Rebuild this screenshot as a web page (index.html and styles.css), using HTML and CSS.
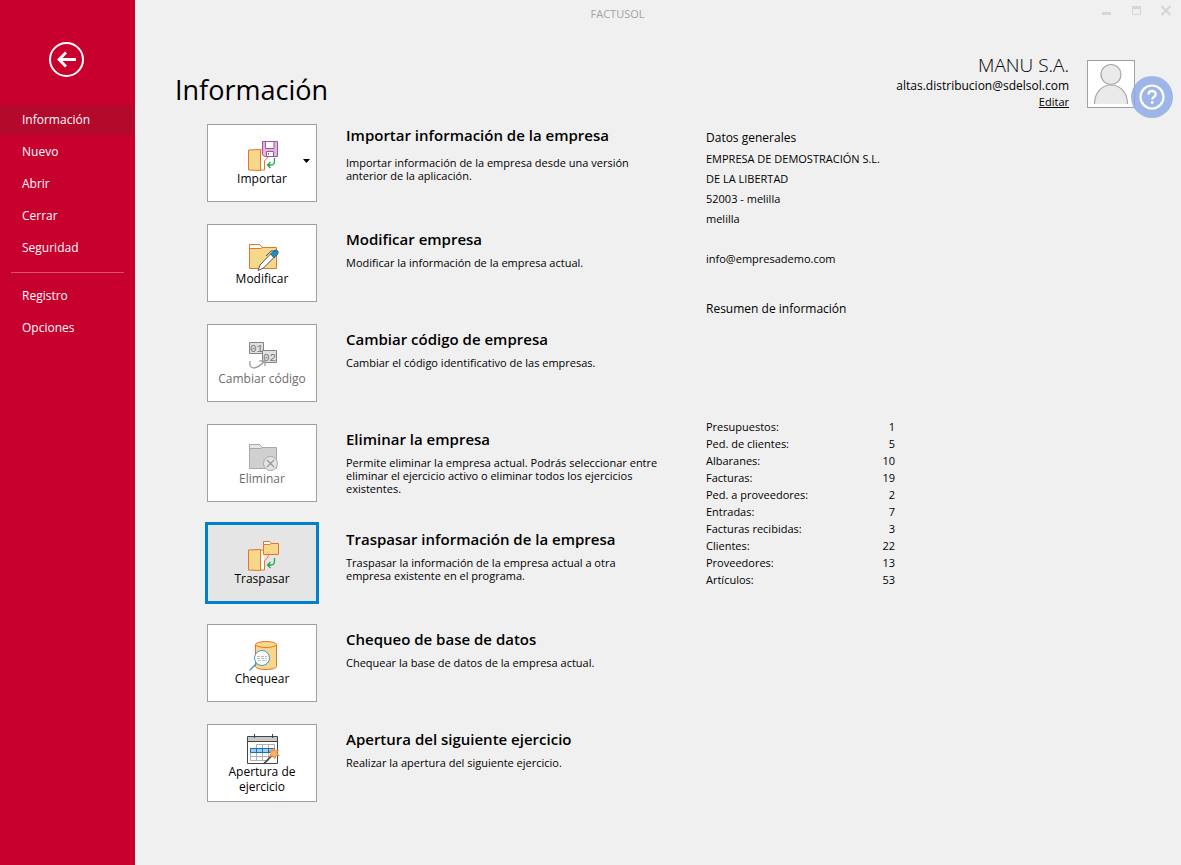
FILE: index.html
```html
<!DOCTYPE html>
<html lang="es">
<head>
<meta charset="utf-8">
<meta name="viewport" content="width=device-width, initial-scale=1">
<title>FACTUSOL</title>
<link rel="stylesheet" href="styles.css">
</head>
<body>
<div class="app">
  <aside class="sidebar">
    <button class="back" type="button" aria-label="Volver">
      <svg viewBox="0 0 36 36" width="36" height="36" fill="none" stroke="#fff"><circle cx="18.500" cy="18.500" r="16.500" stroke-width="2"/><path d="M28 18.500H11M18 11.500l-7 7 7 7" stroke-width="2.800"/></svg>
    </button>
    <nav class="menu">
      <a class="menu-item active" href="#">Información</a>
      <a class="menu-item" href="#">Nuevo</a>
      <a class="menu-item" href="#">Abrir</a>
      <a class="menu-item" href="#">Cerrar</a>
      <a class="menu-item" href="#">Seguridad</a>
      <hr class="menu-line">
      <a class="menu-item" href="#">Registro</a>
      <a class="menu-item" href="#">Opciones</a>
    </nav>
  </aside>

  <div class="page">
    <div class="titlebar">
      <span class="app-name">FACTUSOL</span>
      <div class="controls">
        <button type="button" aria-label="Minimizar"><svg viewBox="0 0 12 12" width="12" height="12"><path d="M2 7h9v3H2z" fill="#d6d6d6"/></svg></button>
        <button type="button" aria-label="Maximizar"><svg viewBox="0 0 12 12" width="12" height="12"><path d="M2.500 2.500h8v7h-8z" fill="none" stroke="#d6d6d6"/><path d="M2 1h9v3H2z" fill="#d6d6d6"/></svg></button>
        <button type="button" aria-label="Cerrar ventana"><svg viewBox="0 0 12 12" width="12" height="12"><path d="M1.500 1l9 9M10.500 1l-9 9" stroke="#d6d6d6" stroke-width="2.200"/></svg></button>
      </div>
    </div>

    <header class="header">
      <h1>Información</h1>
      <div class="account">
        <div class="account-text">
          <span class="account-name">MANU S.A.</span>
          <span class="account-mail">altas.distribucion@sdelsol.com</span>
          <a class="account-edit" href="#">Editar</a>
        </div>
        <div class="avatar">
          <svg viewBox="0 0 46 46" width="46" height="46" fill="#eaeaea" stroke="#a6a6a6" stroke-width="1.200"><path d="M6.500 43c0-11 7-19 16.500-19s16.500 8 16.500 19" /><circle cx="23" cy="13.500" r="10"/></svg>
          <button class="help" type="button" aria-label="Ayuda">
            <svg viewBox="0 0 42 42" width="42" height="42" fill="none" stroke="#fff"><circle cx="21" cy="21" r="11.500" stroke-width="2.200"/><path d="M17.500 18.500c0-4.600 7.200-4.600 7.200-.3 0 2.800-3.500 2.500-3.500 5.300" stroke-width="2.300"/><circle cx="21.200" cy="26.500" r="1.400" fill="#fff" stroke="none"/></svg>
          </button>
        </div>
      </div>
    </header>

    <div class="content">
      <main class="actions">
        <section class="action">
          <button class="tile" type="button">
            <svg class="icon" viewBox="0 0 32 31"><path d="M14.500 10h4v-1M14.500 30h4v-9l3.500-4" fill="#fff" stroke="#e8742a"/><path d="M15 11h3v18h-3z" fill="#fff"/><path d="M2.500 10l12-.5v21l-12-.5z" fill="#f6d88c" stroke="#e8742a"/><path d="M16.500 1.500h15v15h-13l-2-2z" fill="#dcb9dc" stroke="#a353a3"/><path d="M19.500 1.500h8.500v7h-8.500zM20.500 16.500v-5h7v5z" fill="#fff" stroke="#a353a3"/><path d="M22.500 13v2" stroke="#777"/><path d="M28.500 18v3q0 4-3.500 4h-3M24.500 22l-3 3 3 3" fill="none" stroke="#21a651" stroke-width="1.300"/></svg>
            <span>Importar</span>
            <svg class="caret" viewBox="0 0 7 4"><path d="M0 0h7L3.500 4z"/></svg>
          </button>
          <div class="action-text first">
            <h2>Importar información de la empresa</h2>
            <p>Importar información de la empresa desde una versión anterior de la aplicación.</p>
          </div>
        </section>
        <section class="action">
          <button class="tile" type="button">
            <svg class="icon" viewBox="0 0 32 31"><path d="M3.500 28.500v-24h10l3 3h14v21z" fill="#f6d88c" stroke="#e8742a"/><path d="M3.500 8.500v-4h10l3 3-2 1z" fill="#fff" stroke="#e8742a"/><path d="M12 30.500l2-5.500L25 13.500l3.500 3.500-11 11z" fill="#fff" stroke="#555"/><path d="M24.500 14l3-3q2.500-2 4.500 0 1 2-1 4l-3 3z" fill="#1590d0" stroke="#28475a" stroke-width=".6"/><path d="M20 16l5-5h5" fill="none" stroke="#555"/></svg>
            <span>Modificar</span>
          </button>
          <div class="action-text">
            <h2>Modificar empresa</h2>
            <p>Modificar la información de la empresa actual.</p>
          </div>
        </section>
        <section class="action">
          <button class="tile" type="button" disabled>
            <svg class="icon" viewBox="0 0 32 31"><path d="M3.500 2.500h14v11h-14z" fill="#e0e0e0" stroke="#858585"/><path d="M16.500 10.500h14v12h-14z" fill="#e0e0e0" stroke="#858585"/><text class="digits" x="4" y="12">01</text><text class="digits" x="17" y="21">02</text><path d="M4 21q-1 7 4 7 5-.5 11-7.500M13.500 21h5.500v5" fill="none" stroke="#a0a0a0" stroke-width="1.400"/></svg>
            <span>Cambiar código</span>
          </button>
          <div class="action-text">
            <h2>Cambiar código de empresa</h2>
            <p>Cambiar el código identificativo de las empresas.</p>
          </div>
        </section>
        <section class="action">
          <button class="tile" type="button" disabled>
            <svg class="icon" viewBox="0 0 32 31"><path d="M3.500 28.500v-24h10l3 3h14v21z" fill="#d0d0d0" stroke="#a9a9a9"/><path d="M3.500 8.500v-4h10l3 3-2 1z" fill="#e6e6e6" stroke="#a9a9a9"/><circle cx="24.500" cy="23.500" r="7" fill="#e4e4e4" stroke="#a9a9a9"/><path d="M21 20l7 7M28 20l-7 7" stroke="#999" stroke-width="1.300"/></svg>
            <span>Eliminar</span>
          </button>
          <div class="action-text">
            <h2>Eliminar la empresa</h2>
            <p>Permite eliminar la empresa actual. Podrás seleccionar entre eliminar el ejercicio activo o eliminar todos los ejercicios existentes.</p>
          </div>
        </section>
        <section class="action">
          <button class="tile selected" type="button">
            <svg class="icon" viewBox="0 0 32 31"><path d="M14.500 10h4v-1M14.500 30h4v-9l3.500-4v-3" fill="#fff" stroke="#e8742a"/><path d="M15 11h3v18h-3z" fill="#fff"/><path d="M2.500 10l12-.5v21l-12-.5z" fill="#f6d88c" stroke="#e8742a"/><path d="M17.500 14.500v-13h6l2 2h7v11z" fill="#f6d88c" stroke="#e8742a"/><path d="M17.500 4.500v-3h6l2 2-2 1z" fill="#fff" stroke="#e8742a"/><path d="M28.500 18v3q0 4-3.500 4h-3M24.500 22l-3 3 3 3" fill="none" stroke="#21a651" stroke-width="1.300"/></svg>
            <span>Traspasar</span>
          </button>
          <div class="action-text">
            <h2>Traspasar información de la empresa</h2>
            <p>Traspasar la información de la empresa actual a otra empresa existente en el programa.</p>
          </div>
        </section>
        <section class="action">
          <button class="tile" type="button">
            <svg class="icon" viewBox="0 0 32 31"><path d="M9.500 4.500v22c0 4 21 4 21 0v-22" fill="#f6d88c" stroke="#e8742a"/><ellipse cx="20" cy="4.500" rx="10.500" ry="3" fill="#f6d88c" stroke="#e8742a"/><path d="M10.500 23.500L3.500 30.500" stroke="#3d96cf" stroke-width="1.500"/><circle cx="16" cy="18" r="7.500" fill="#fff" stroke="#3d96cf"/><path d="M11 16.500h10M11 18.500h10M12 20.500h9" stroke="#aaa" stroke-width=".8" stroke-dasharray="3 1"/></svg>
            <span>Chequear</span>
          </button>
          <div class="action-text">
            <h2>Chequeo de base de datos</h2>
            <p>Chequear la base de datos de la empresa actual.</p>
          </div>
        </section>
        <section class="action">
          <button class="tile" type="button">
            <svg class="icon" viewBox="0 0 32 31"><path d="M1.500 3.500h30v27h-30z" fill="#fff" stroke="#444"/><path d="M2 4h29v4H2z" fill="#c8c8c8"/><path d="M1.500 8.500h30M8.500 1v4M26.500 1v4" stroke="#444"/><path d="M10.500 11.500h18v12h-6v4h-18v-12M4.500 23.500h18M10.500 11.500v16M16.500 11.500v16M22.500 11.500v12" fill="none" stroke="#b0b0b0"/><path d="M4.500 15.500h24v4h-24zM10.500 15.500v4M16.500 15.500v4M22.500 15.500v4" fill="#9ccdf0" stroke="#1671b8"/><path d="M17.500 31L26 22.500" stroke="#444" stroke-width="1.700"/><path d="M28 15l1.300 3 3-1-1.300 3 2 2.500-3.200.2-1 3-2-2.700-3.300.5 1.500-3-1.500-2.700 3.200.2z" fill="#f9b268" stroke="#e8742a" stroke-width=".8"/></svg>
            <span>Apertura de ejercicio</span>
          </button>
          <div class="action-text">
            <h2>Apertura del siguiente ejercicio</h2>
            <p>Realizar la apertura del siguiente ejercicio.</p>
          </div>
        </section>
      </main>

      <aside class="summary">
        <h3>Datos generales</h3>
        <address class="company">
          <span>EMPRESA DE DEMOSTRACIÓN S.L.</span>
          <span>DE LA LIBERTAD</span>
          <span>52003 - melilla</span>
          <span>melilla</span>
          <span class="mail">info@empresademo.com</span>
        </address>
        <h3>Resumen de información</h3>
        <table class="totals">
          <tbody>
            <tr><th scope="row">Presupuestos:</th><td>1</td></tr>
            <tr><th scope="row">Ped. de clientes:</th><td>5</td></tr>
            <tr><th scope="row">Albaranes:</th><td>10</td></tr>
            <tr><th scope="row">Facturas:</th><td>19</td></tr>
            <tr><th scope="row">Ped. a proveedores:</th><td>2</td></tr>
            <tr><th scope="row">Entradas:</th><td>7</td></tr>
            <tr><th scope="row">Facturas recibidas:</th><td>3</td></tr>
            <tr><th scope="row">Clientes:</th><td>22</td></tr>
            <tr><th scope="row">Proveedores:</th><td>13</td></tr>
            <tr><th scope="row">Artículos:</th><td>53</td></tr>
          </tbody>
        </table>
      </aside>
    </div>
  </div>
</div>
</body>
</html>
```

FILE: styles.css
```css
* { box-sizing: border-box; }

body {
  margin: 0;
  background: #f0f0f0;
  color: #000;
  font-family: "Open Sans", "Noto Sans", sans-serif;
  font-size: 11px;
}

h1, h2, h3, p { margin: 0; }

button {
  padding: 0;
  border: 0;
  background: none;
  font: inherit;
  color: inherit;
}

svg { display: block; }

.app { display: flex; min-height: 100vh; }

/* Sidebar */
.sidebar {
  flex: none;
  width: 135px;
  background: #c8002d;
}

.back { display: block; margin: 41px auto 28px 48px; }

.menu { display: flex; flex-direction: column; gap: 2px; }

.menu-item {
  padding: 0 22px;
  font-size: 12px;
  line-height: 30px;
  color: #fff;
  text-decoration: none;
}

.menu-item.active { background: #b4092b; }

.menu-line {
  width: 113px;
  margin: 7px 0 6px 11px;
  border: 0;
  border-top: 1px solid #d8506c;
}

/* Title bar and header */
.page { flex: 1; min-width: 0; }

.titlebar { display: flex; height: 28px; }

.app-name {
  flex: 1;
  text-align: center;
  font-size: 11px;
  line-height: 28px;
  color: #a3a3a3;
}

.controls {
  display: flex;
  align-items: flex-start;
  gap: 18px;
  width: 81px;
  padding-top: 5px;
}

.header {
  display: flex;
  justify-content: space-between;
  padding: 26px 46px 0 40px;
}

h1 {
  padding-top: 16px;
  font-size: 27px;
  font-weight: 400;
  line-height: 40px;
}

.account { display: flex; gap: 18px; }

.account-text {
  display: flex;
  flex-direction: column;
  align-items: flex-end;
}

.account-name { font-size: 19px; font-weight: 300; line-height: 23px; }
.account-mail { font-size: 12px; line-height: 17px; }
.account-edit { font-size: 11px; line-height: 16px; color: #000; }

.avatar {
  position: relative;
  width: 48px;
  height: 48px;
  margin-top: 6px;
  border: 1px solid #a0a0a0;
  background: #fff;
}

.help {
  position: absolute;
  top: 15px;
  left: 43px;
  border-radius: 50%;
  background: rgba(138, 166, 230, 0.8);
}

/* Actions */
.content {
  display: flex;
  gap: 46px;
  padding: 14px 40px 40px 72px;
}

.actions {
  display: flex;
  flex-direction: column;
  gap: 22px;
  width: 453px;
}

.action { display: flex; gap: 29px; }

.tile {
  position: relative;
  display: flex;
  flex: none;
  flex-direction: column;
  align-items: center;
  justify-content: center;
  width: 110px;
  height: 78px;
  padding: 0 12px;
  border: 1px solid #a0a0a0;
  background: #fff;
  font-size: 12px;
  line-height: 15px;
}

.tile:disabled { padding: 0; color: #6d6d6d; }

.tile.selected {
  background: #e5e5e5;
  outline: 3px solid #0080cc;
  outline-offset: -1px;
}

.icon { width: 32px; height: 31px; overflow: visible; }

.digits {
  font-family: "Liberation Mono", monospace;
  font-size: 11px;
  fill: #777;
}

.caret {
  position: absolute;
  top: 34px;
  right: 6px;
  width: 7px;
  height: 4px;
}

.action-text { padding-top: 5px; }

h2 {
  margin-bottom: 7px;
  font-size: 15px;
  font-weight: 600;
  line-height: 20px;
}

.action-text p { line-height: 13px; }

.action-text.first { padding-top: 1px; }
.action-text.first h2 { margin-bottom: 11px; }

/* Summary */
.summary { flex: 1; padding-top: 3px; }

h3 { font-size: 12px; font-weight: 400; line-height: 22px; }

.company {
  display: flex;
  flex-direction: column;
  margin-bottom: 29px;
  font-style: normal;
  line-height: 20px;
}

.company .mail { margin-top: 20px; }

.totals {
  width: 189px;
  margin-top: 98px;
  border-collapse: collapse;
  line-height: 17px;
}

.totals th { padding: 0; font-weight: 400; text-align: left; }
.totals td { padding: 0; text-align: right; }
```
